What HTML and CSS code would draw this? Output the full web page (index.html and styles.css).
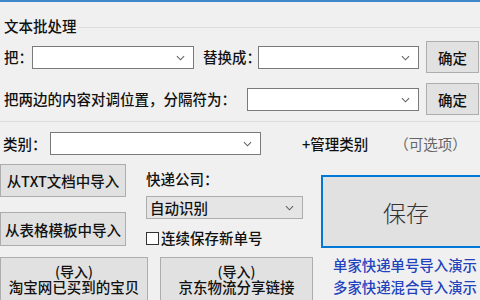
FILE: index.html
```html
<!DOCTYPE html>
<html>
<head>
<meta charset="utf-8">
<link rel="stylesheet" href="styles.css">
</head>
<body>
<div class="app">
  <div class="topbar"></div>
  <div class="legend"><span class="legend-text">文本批处理</span><span class="legend-line"></span></div>

  <div class="row row1">
    <span class="lbl lbl-ba">把：</span>
    <div class="combo w162"><svg class="chev" viewBox="0 0 10 6"><polyline points="1,1 5,5 9,1"/></svg></div>
    <span class="lbl lbl-rep">替换成：</span>
    <div class="combo w161"><svg class="chev" viewBox="0 0 10 6"><polyline points="1,1 5,5 9,1"/></svg></div>
    <button class="btn ok">确定</button>
  </div>

  <div class="row row2">
    <span class="lbl lbl-swap">把两边的内容对调位置，分隔符为：</span>
    <div class="combo w172"><svg class="chev" viewBox="0 0 10 6"><polyline points="1,1 5,5 9,1"/></svg></div>
    <button class="btn ok">确定</button>
  </div>

  <div class="sep"></div>

  <div class="row row3">
    <span class="lbl lbl-cat">类别：</span>
    <div class="combo w211"><svg class="chev" viewBox="0 0 10 6"><polyline points="1,1 5,5 9,1"/></svg></div>
    <span class="manage">+管理类别</span>
    <span class="optional">（可选项）</span>
  </div>

  <div class="lower">
    <div class="col-left">
      <button class="btn imp imp1">从TXT文档中导入</button>
      <button class="btn imp imp2">从表格模板中导入</button>
    </div>
    <div class="col-mid">
      <div class="courier-lbl">快递公司：</div>
      <div class="combo grey"><span class="combo-val">自动识别</span><svg class="chev" viewBox="0 0 10 6"><polyline points="1,1 5,5 9,1"/></svg></div>
      <label class="check"><span class="box"></span><span>连续保存新单号</span></label>
    </div>
    <div class="col-right">
      <button class="save">保存</button>
    </div>
  </div>

  <div class="bottom">
    <div class="btn two tb"><div class="l1">(导入)</div><div class="l2">淘宝网已买到的宝贝</div></div>
    <div class="btn two jd"><div class="l1">(导入)</div><div class="l2">京东物流分享链接</div></div>
    <div class="links">
      <a class="link">单家快递单号导入演示</a>
      <a class="link">多家快递混合导入演示</a>
    </div>
  </div>
</div>
</body>
</html>
```

FILE: styles.css
```css
* { box-sizing: border-box; }
html, body {
  margin: 0;
  padding: 0;
  width: 480px;
  height: 300px;
  overflow: hidden;
  background: #f0f0f0;
}
.app {
  width: 480px;
  height: 300px;
  overflow: hidden;
  font-family: "Noto Sans CJK SC", "Liberation Sans", sans-serif;
  font-size: 14.5px;
  font-weight: 500;
  color: #111;
  background: #f0f0f0;
}
.topbar {
  height: 2px;
  background: #3d89cc;
}
.legend {
  display: flex;
  align-items: center;
  height: 20px;
  margin-top: 14px;
  padding-left: 4px;
}
.legend-text { line-height: 20px; white-space: nowrap; }
.legend-line {
  flex: 1;
  height: 1px;
  margin-left: 2px;
  margin-top: 2px;
  background: #dcdcdc;
}
.row {
  display: flex;
  align-items: center;
  white-space: nowrap;
}
.row1 { height: 32px; margin-top: 5px; padding-left: 4px; }
.row2 { height: 32px; margin-top: 10px; padding-left: 4px; }
.row3 { height: 23px; margin-top: 10px; padding-left: 3px; }
.lbl { line-height: 20px; }
.lbl-ba { width: 28px; }
.lbl-rep { width: 55px; margin-left: 9px; }
.lbl-swap { width: 243px; }
.lbl-cat { width: 47px; }

.combo {
  position: relative;
  height: 23px;
  background: #fff;
  border: 1px solid #7a7a7a;
  flex: none;
}
.w162 { width: 162px; }
.w161 { width: 161px; }
.w172 { width: 172px; }
.w211 { width: 211px; }
.chev {
  position: absolute;
  right: 8px;
  top: 8px;
  width: 9px;
  height: 6px;
  fill: none;
  stroke: #606060;
  stroke-width: 1.2;
}
.combo.grey {
  width: 157px;
  background: #e5e5e5;
  border-color: #adadad;
  display: flex;
  align-items: center;
}
.combo-val { padding-left: 3px; line-height: 20px; }

.btn {
  font: inherit;
  color: #111;
  background: #e1e1e1;
  border: 1px solid #adadad;
  border-radius: 0;
  padding: 0;
  margin: 0;
  white-space: nowrap;
}
.ok {
  width: 53px;
  height: 32px;
  margin-left: 7px;
}

.sep {
  height: 1px;
  margin-top: 6px;
  background: #dcdcdc;
}

.manage { margin-left: 41px; line-height: 20px; }
.optional { margin-left: 26px; color: #666; font-weight: 400; line-height: 20px; }

.lower {
  display: flex;
  margin-top: 9px;
  height: 84px;
}
.col-left {
  display: flex;
  flex-direction: column;
  gap: 15px;
  width: 126px;
}
.imp { width: 126px; }
.imp1 { height: 33px; }
.imp2 { height: 34px; }
.col-mid {
  display: flex;
  flex-direction: column;
  width: 157px;
  margin-left: 20px;
}
.courier-lbl { line-height: 20px; margin-top: 5px; }
.col-mid .combo { margin-top: 7px; }
.check {
  display: flex;
  align-items: center;
  height: 19px;
  margin-top: 9px;
}
.box {
  width: 13px;
  height: 13px;
  border: 1px solid #333;
  background: #fff;
  margin-right: 2px;
  margin-top: 1px;
}
.col-right { margin-left: 18px; }
.save {
  width: 165px;
  height: 73px;
  margin-top: 11px;
  background: #e1e1e1;
  border: 2px solid #0078d7;
  border-radius: 0;
  font-family: "Noto Sans CJK SC", sans-serif;
  font-size: 23px;
  font-weight: 300;
  color: #333;
  text-align: left;
  padding: 0 0 0 60px;
}

.bottom {
  display: flex;
  margin-top: 6px;
}
.two {
  margin-top: 3px;
  height: 50px;
  padding-top: 6px;
  text-align: center;
  flex: none;
}
.two .l1, .two .l2 { line-height: 15px; height: 15px; }
.two .l1 { font-size: 14px; }
.tb { width: 148px; }
.jd { width: 153px; margin-left: 12px; }
.links {
  display: flex;
  flex-direction: column;
  margin-left: 20px;
}
.link {
  color: #2342bd;
  line-height: 22px;
  font-size: 14.4px;
  white-space: nowrap;
}
```
